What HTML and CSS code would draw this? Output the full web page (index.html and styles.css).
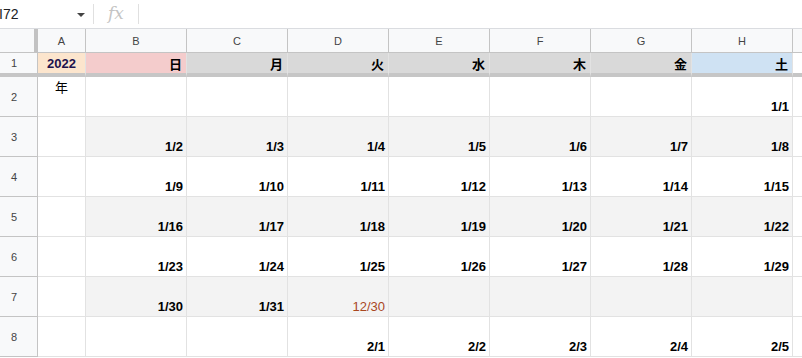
FILE: index.html
```html
<!DOCTYPE html>
<html>
<head>
<meta charset="utf-8">
<link rel="stylesheet" href="styles.css">
</head>
<body>
<div class="formula-bar">
  <div class="namebox"><span class="ref">I72</span><span class="caret"></span></div>
  <div class="sep"></div>
  <span class="fx">fx</span>
  <div class="sep"></div>
</div>
<div class="sheet">
  <div class="corner"></div>
  <div class="colh">A</div><div class="colh">B</div><div class="colh">C</div><div class="colh">D</div><div class="colh">E</div><div class="colh">F</div><div class="colh">G</div><div class="colh">H</div><div class="colh last"></div>

  <div class="rowh frz">1</div>
  <div class="c frz year">2022</div>
  <div class="c frz day sun">日</div>
  <div class="c frz day wk">月</div>
  <div class="c frz day wk">火</div>
  <div class="c frz day wk">水</div>
  <div class="c frz day wk">木</div>
  <div class="c frz day wk">金</div>
  <div class="c frz day sat">土</div>
  <div class="c frz last"></div>

  <div class="rowh">2</div>
  <div class="c nen">年</div><div class="c"></div><div class="c"></div><div class="c"></div><div class="c"></div><div class="c"></div><div class="c"></div><div class="c d">1/1</div><div class="c last"></div>

  <div class="rowh">3</div>
  <div class="c"></div><div class="c s d">1/2</div><div class="c s d">1/3</div><div class="c s d">1/4</div><div class="c s d">1/5</div><div class="c s d">1/6</div><div class="c s d">1/7</div><div class="c s d">1/8</div><div class="c last"></div>

  <div class="rowh">4</div>
  <div class="c"></div><div class="c d">1/9</div><div class="c d">1/10</div><div class="c d">1/11</div><div class="c d">1/12</div><div class="c d">1/13</div><div class="c d">1/14</div><div class="c d">1/15</div><div class="c last"></div>

  <div class="rowh">5</div>
  <div class="c"></div><div class="c s d">1/16</div><div class="c s d">1/17</div><div class="c s d">1/18</div><div class="c s d">1/19</div><div class="c s d">1/20</div><div class="c s d">1/21</div><div class="c s d">1/22</div><div class="c last"></div>

  <div class="rowh">6</div>
  <div class="c"></div><div class="c d">1/23</div><div class="c d">1/24</div><div class="c d">1/25</div><div class="c d">1/26</div><div class="c d">1/27</div><div class="c d">1/28</div><div class="c d">1/29</div><div class="c last"></div>

  <div class="rowh">7</div>
  <div class="c"></div><div class="c s d">1/30</div><div class="c s d">1/31</div><div class="c s d other">12/30</div><div class="c s"></div><div class="c s"></div><div class="c s"></div><div class="c s"></div><div class="c last"></div>

  <div class="rowh">8</div>
  <div class="c"></div><div class="c"></div><div class="c"></div><div class="c d">2/1</div><div class="c d">2/2</div><div class="c d">2/3</div><div class="c d">2/4</div><div class="c d">2/5</div><div class="c last"></div>
</div>
</body>
</html>
```
FILE: styles.css
```css
html, body {
  margin: 0;
  padding: 0;
  background: #fff;
  overflow: hidden;
}
body {
  font-family: "Liberation Sans", Arial, "Noto Sans CJK JP", sans-serif;
  width: 802px;
  height: 358px;
}
.formula-bar {
  height: 29px;
  box-sizing: border-box;
  border-bottom: 1px solid #dadce0;
  display: flex;
  align-items: center;
}
.namebox {
  width: 93px;
  display: flex;
  align-items: center;
  justify-content: space-between;
  padding-right: 8px;
  box-sizing: border-box;
}
.ref {
  font-size: 14px;
  color: #202124;
  margin-left: -1px;
}
.caret {
  width: 0;
  height: 0;
  border-left: 4px solid transparent;
  border-right: 4px solid transparent;
  border-top: 4px solid #444;
  margin-top: 2px;
}
.sep {
  width: 1px;
  height: 20px;
  background: #e0e0e0;
}
.fx {
  font-family: "DejaVu Serif", "Liberation Serif", serif;
  font-style: italic;
  font-size: 17px;
  color: #c4c4c4;
  width: 44px;
  text-align: center;
  margin-top: -3px;
}
.sheet {
  display: grid;
  grid-template-columns: 38px 48px repeat(7, 101px) 1fr;
  grid-template-rows: 24px 24px repeat(7, 40px);
}
.sheet > div {
  box-sizing: border-box;
  border-right: 1px solid #e2e2e2;
  border-bottom: 1px solid #e2e2e2;
  overflow: hidden;
  white-space: nowrap;
}
.corner {
  background: #f8f9fa;
  border-right: 4px solid #c2c2c2 !important;
  border-bottom: 1px solid #c4c4c4 !important;
}
.colh {
  background: #f8f9fa;
  border-right: 1px solid #c4c4c4 !important;
  border-bottom: 1px solid #c4c4c4 !important;
  font-size: 11px;
  color: #444;
  display: flex;
  align-items: center;
  justify-content: center;
  padding-top: 1px;
}
.rowh {
  background: #f8f9fa;
  border-right: 1px solid #c4c4c4 !important;
  border-bottom: 1px solid #c4c4c4 !important;
  font-size: 11px;
  color: #444;
  display: flex;
  align-items: center;
  justify-content: center;
  padding-right: 9px;
}
.frz {
  border-bottom: 4px solid #c6c6c6 !important;
}
.c {
  font-size: 13px;
  color: #000;
  display: flex;
  align-items: flex-end;
  justify-content: flex-end;
  padding: 0 3px 2px 0;
  line-height: 15px;
}
.year {
  background: #fce5cd;
  color: #20124d;
  font-weight: bold;
  justify-content: center;
  align-items: center;
  padding: 1px 0 0 0;
  font-size: 13px;
}
.day {
  font-family: "Noto Sans CJK JP", "Liberation Sans", sans-serif;
  font-weight: bold;
  align-items: center;
  padding: 0 4px 0 0;
  font-size: 13px;
}
.sun { background: #f4cccc; }
.wk { background: #d9d9d9; }
.sat { background: #cfe2f3; }
.nen {
  font-family: "Noto Sans CJK JP", "Liberation Sans", sans-serif;
  justify-content: center;
  align-items: flex-start;
  padding: 2px 0 0 0;
  font-size: 13px;
}
.s { background: #f3f3f3; }
.d { font-weight: bold; }
.other {
  color: #a9471f;
  font-weight: normal;
}
.last {
  border-right: none !important;
}
```
